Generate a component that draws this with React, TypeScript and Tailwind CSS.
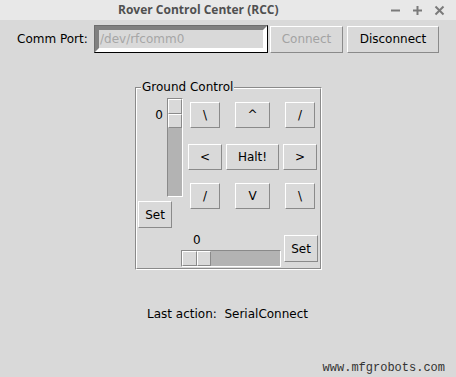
import React from "react";

const FONT = { fontFamily: '"DejaVu Sans", sans-serif' };

function TkButton({
  label,
  w,
  h = 26,
  disabled = false,
  className = "",
}: {
  label: string;
  w: number;
  h?: number;
  disabled?: boolean;
  className?: string;
}) {
  return (
    <div
      className={
        "flex items-center justify-center bg-[#d9d9d9] border border-t-[#ffffff] border-l-[#ffffff] border-b-[#8a8a8a] border-r-[#8a8a8a] text-[12px] leading-[14px] " +
        (disabled ? "text-[#a3a3a3] " : "text-black ") +
        className
      }
      style={{ width: w, height: h }}
    >
      {label}
    </div>
  );
}

function SliderHalf({ className = "" }: { className?: string }) {
  return (
    <div
      className={
        "bg-[#d9d9d9] border border-t-[#ffffff] border-l-[#ffffff] border-b-[#8a8a8a] border-r-[#8a8a8a] " +
        className
      }
    />
  );
}

export default function App() {
  return (
    <div
      className="w-[456px] h-[377px] overflow-hidden bg-[#d9d9d9] flex flex-col text-black"
      style={FONT}
    >
      {/* Title bar */}
      <div className="h-[20px] bg-[#e8e8e8] flex items-center shrink-0">
        <div
          className="pl-[118px] text-[12px] leading-[16px] font-bold text-[#505050]"
          style={{ fontFamily: '"Open Sans", "DejaVu Sans", sans-serif' }}
        >
          Rover Control Center (RCC)
        </div>
        <div className="ml-auto mr-[11px] flex items-center gap-[11px]">
          <svg width="11" height="11" viewBox="0 0 11 11">
            <line x1="1" y1="5.5" x2="10" y2="5.5" stroke="#7a7a7a" strokeWidth="2" />
          </svg>
          <svg width="11" height="11" viewBox="0 0 11 11">
            <line x1="1" y1="5.5" x2="10" y2="5.5" stroke="#7a7a7a" strokeWidth="2" />
            <line x1="5.5" y1="1" x2="5.5" y2="10" stroke="#7a7a7a" strokeWidth="2" />
          </svg>
          <svg width="11" height="11" viewBox="0 0 11 11">
            <line x1="1.5" y1="1.5" x2="9.5" y2="9.5" stroke="#7a7a7a" strokeWidth="2" />
            <line x1="9.5" y1="1.5" x2="1.5" y2="9.5" stroke="#7a7a7a" strokeWidth="2" />
          </svg>
        </div>
      </div>

      {/* Comm port row */}
      <div className="mt-[5px] h-[28px] flex items-center pl-[17px] shrink-0">
        <div className="text-[12px] leading-[14px] w-[77px]">Comm Port:</div>
        <div className="w-[174px] h-[28px] border border-t-[#6e6e6e] border-l-[#6e6e6e] border-b-black border-r-black">
          <div className="w-full h-full border-[4px] border-t-[#808080] border-l-[#808080] border-b-white border-r-white bg-[#d9d9d9] flex items-center pl-[1px] text-[12px] leading-[14px] text-[#a6a6a6]">
            /dev/rfcomm0
          </div>
        </div>
        <TkButton label="Connect" w={73} h={27} disabled className="ml-[2px]" />
        <TkButton label="Disconnect" w={92} h={27} className="ml-[4px]" />
      </div>

      {/* Ground Control frame */}
      <div className="mt-[34px] ml-[135px] w-[187px] h-[183px] relative shrink-0 border border-t-[#8a8a8a] border-l-[#8a8a8a] border-b-white border-r-white">
        <div className="w-full h-full border border-t-white border-l-white border-b-[#8a8a8a] border-r-[#8a8a8a] flex flex-col">
          {/* top part */}
          <div className="flex h-[139px]">
            {/* left column */}
            <div className="w-[49px] flex flex-col">
              <div className="mt-[9px] flex justify-end pr-[3px]">
                <div className="mt-[10px] mr-[4px] text-[12px] leading-[14px]">0</div>
                <div className="w-[16px] h-[99px] bg-[#b3b3b3] border border-t-[#8a8a8a] border-l-[#8a8a8a] border-b-[#ffffff] border-r-[#ffffff] flex flex-col">
                  <SliderHalf className="h-[15px] w-full" />
                  <SliderHalf className="h-[14px] w-full" />
                </div>
              </div>
              <TkButton label="Set" w={34} h={27} className="mt-[4px] ml-[1px]" />
            </div>
            {/* buttons */}
            <div className="w-[133px] pt-[13px] flex flex-col">
              <div className="grid grid-cols-[38px_57px_38px] justify-items-center">
                <TkButton label="\" w={30} />
                <TkButton label="^" w={35} />
                <TkButton label="/" w={30} />
              </div>
              <div className="mt-[16px] grid grid-cols-[38px_57px_38px] justify-items-center">
                <TkButton label="<" w={34} />
                <TkButton label="Halt!" w={53} />
                <TkButton label=">" w={34} />
              </div>
              <div className="mt-[13px] grid grid-cols-[38px_57px_38px] justify-items-center">
                <TkButton label="/" w={30} />
                <TkButton label="V" w={35} />
                <TkButton label="\" w={30} />
              </div>
            </div>
          </div>
          {/* bottom part */}
          <div className="flex h-[40px]">
            <div className="ml-[44px] w-[100px] flex flex-col pt-[5px]">
              <div className="ml-[12px] text-[12px] leading-[14px]">0</div>
              <div className="mt-[3px] w-[100px] h-[17px] bg-[#b3b3b3] border border-t-[#8a8a8a] border-l-[#8a8a8a] border-b-[#ffffff] border-r-[#ffffff] flex">
                <SliderHalf className="w-[15px] h-full" />
                <SliderHalf className="w-[14px] h-full" />
              </div>
            </div>
            <TkButton label="Set" w={34} h={27} className="ml-[3px] mt-[7px]" />
          </div>
        </div>
        <div className="absolute left-[5px] top-[-8px] px-[1px] bg-[#d9d9d9] text-[12px] leading-[14px]">
          Ground Control
        </div>
      </div>

      {/* Last action */}
      <div className="mt-[37px] pl-[147px] text-[12px] leading-[14px] whitespace-pre shrink-0">
        Last action:  SerialConnect
      </div>

      {/* watermark */}
      <div
        className="mt-[40px] pr-[11px] flex justify-end text-[12px] leading-[14px] text-[#333333] shrink-0"
        style={{ fontFamily: '"Liberation Mono", monospace' }}
      >
        www.mfgrobots.com
      </div>
    </div>
  );
}
